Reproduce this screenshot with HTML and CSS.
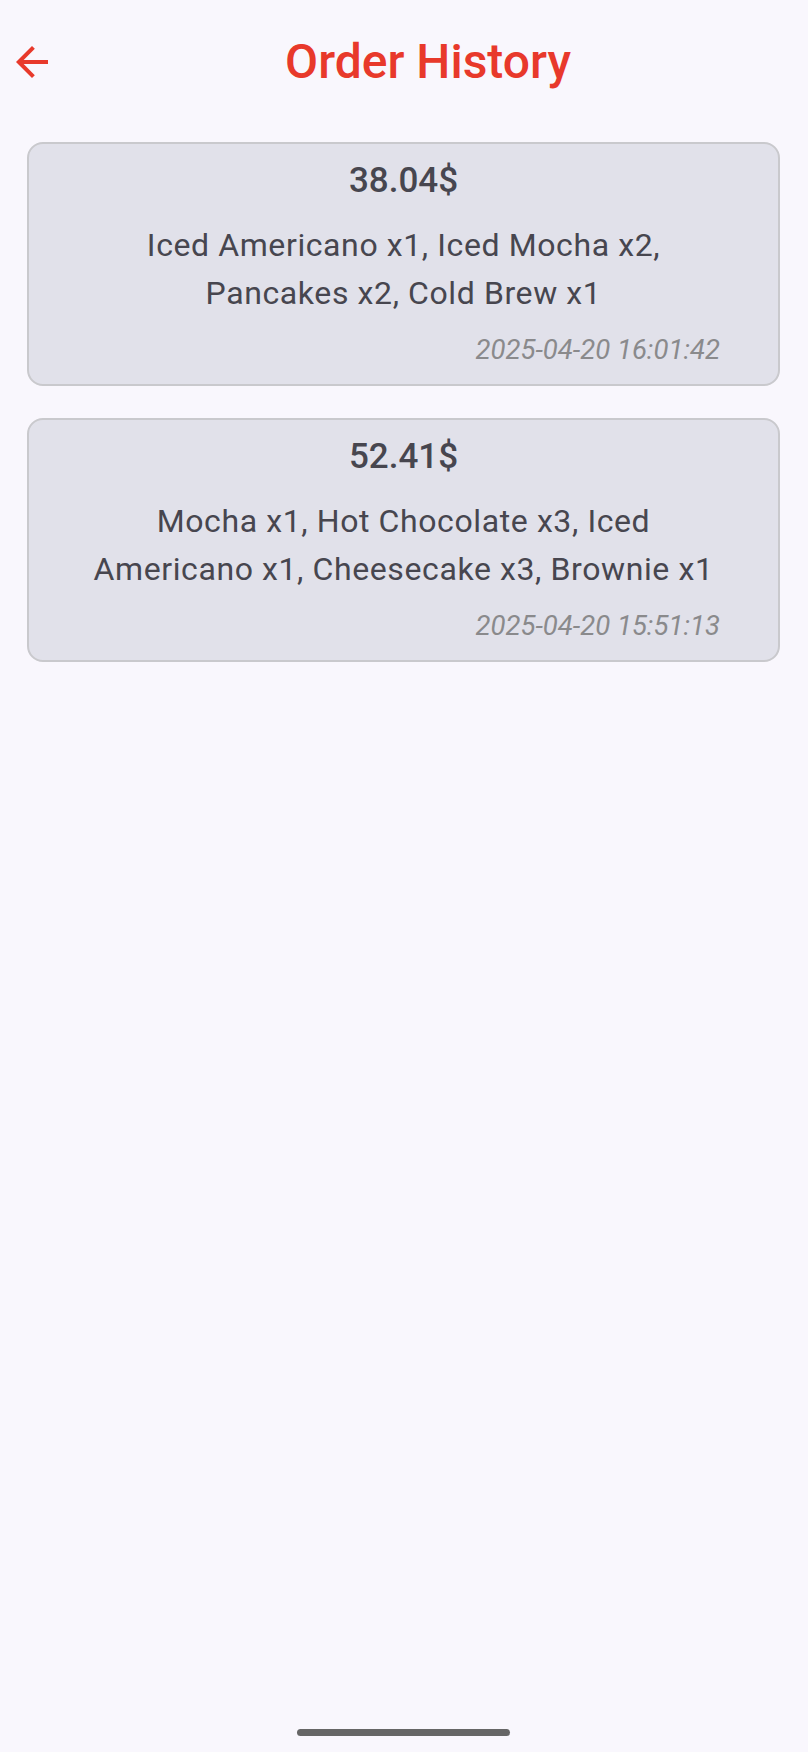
FILE: index.html
```html
<!DOCTYPE html>
<html lang="en">
<head>
<meta charset="utf-8">
<title>Order History</title>
<link rel="stylesheet" href="styles.css">
</head>
<body>
<div class="screen">
  <header class="topbar">
    <button class="back" aria-label="Back">
      <svg viewBox="0 0 24 24" width="48" height="48"><path d="M20 11H7.83l5.59-5.59L12 4l-8 8 8 8 1.41-1.41L7.83 13H20v-2z" fill="currentColor"/></svg>
    </button>
    <h1 class="title">Order History</h1>
  </header>
  <main class="list">
    <section class="card">
      <div class="price">38.04$</div>
      <div class="items">Iced Americano x1, Iced Mocha x2, Pancakes x2, Cold Brew x1</div>
      <div class="time">2025-04-20 16:01:42</div>
    </section>
    <section class="card">
      <div class="price">52.41$</div>
      <div class="items">Mocha x1, Hot Chocolate x3, Iced Americano x1, Cheesecake x3, Brownie x1</div>
      <div class="time">2025-04-20 15:51:13</div>
    </section>
  </main>
  <div class="gesture-bar"></div>
</div>
</body>
</html>
```
FILE: styles.css
```css
* { box-sizing: border-box; }
html, body { margin: 0; padding: 0; }
body {
  background: #f9f7fd;
  font-family: Roboto, "Noto Sans", "Liberation Sans", sans-serif;
  color: #47464f;
}
.screen {
  position: relative;
  width: 808px;
  height: 1752px;
  overflow: hidden;
}
.topbar {
  display: flex;
  align-items: center;
  height: 56px;
  margin-top: 34px;
  padding: 0 8px;
}
.back {
  flex: none;
  width: 48px;
  height: 48px;
  padding: 0;
  border: 0;
  background: none;
  color: #e8392b;
  display: flex;
}
.title {
  flex: 1;
  margin: 0;
  text-align: center;
  font-size: 48px;
  font-weight: 500;
  line-height: 56px;
  color: #e8392b;
}
.list {
  display: flex;
  flex-direction: column;
  gap: 32px;
  padding: 52px 28px 0 27px;
}
.card {
  display: flex;
  flex-direction: column;
  background: #e1e1ea;
  border: 2px solid #c9c9cd;
  border-radius: 16px;
  padding: 17px 40px 18px;
  text-align: center;
}
.price {
  font-size: 35px;
  font-weight: 500;
  line-height: 40px;
}
.items {
  margin-top: 20px;
  padding: 0 14px;
  font-size: 32px;
  line-height: 48px;
  letter-spacing: 0.6px;
}
.time {
  margin-top: 16px;
  padding-right: 18px;
  text-align: right;
  font-size: 27.5px;
  font-style: italic;
  line-height: 33px;
  color: #8a8a8c;
}
.gesture-bar {
  position: absolute;
  left: 297px;
  top: 1729px;
  width: 213px;
  height: 7px;
  border-radius: 4px;
  background: #666666;
}
```
